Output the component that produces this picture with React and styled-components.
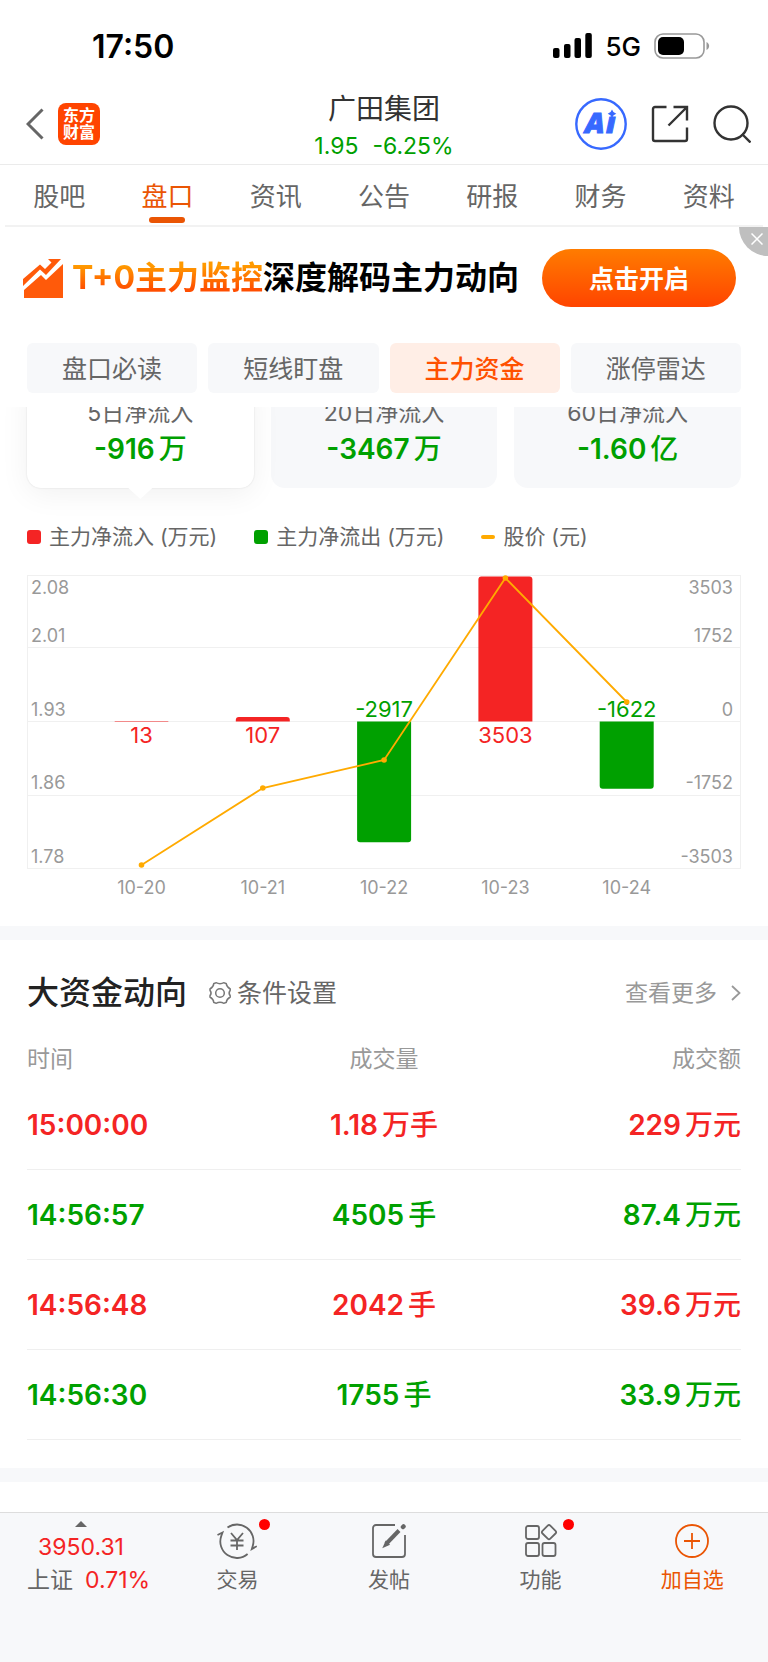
import styled, { createGlobalStyle, css } from "styled-components";

const tabs = ["股吧", "盘口", "资讯", "公告", "研报", "财务", "资料"];
const pills = ["盘口必读", "短线盯盘", "主力资金", "涨停雷达"];

const flows = [
  { label: "5日净流入", num: "-916", unit: "万" },
  { label: "20日净流入", num: "-3467", unit: "万" },
  { label: "60日净流入", num: "-1.60", unit: "亿" },
];

const days = [
  { date: "10-20", flow: 13, priceY: 295 },
  { date: "10-21", flow: 107, priceY: 218 },
  { date: "10-22", flow: -2917, priceY: 190 },
  { date: "10-23", flow: 3503, priceY: 8 },
  { date: "10-24", flow: -1622, priceY: 132 },
];

const axis = [
  { y: 5, textY: 18, price: "2.08", flow: "3503" },
  { y: 77, textY: 66, price: "2.01", flow: "1752" },
  { y: 151, textY: 140, price: "1.93", flow: "0" },
  { y: 225, textY: 213, price: "1.86", flow: "-1752" },
  { y: 298, textY: 287, price: "1.78", flow: "-3503" },
];

const deals = [
  { time: "15:00:00", volume: "1.18", volumeUnit: "万手", amount: "229", up: true },
  { time: "14:56:57", volume: "4505", volumeUnit: "手", amount: "87.4", up: false },
  { time: "14:56:48", volume: "2042", volumeUnit: "手", amount: "39.6", up: true },
  { time: "14:56:30", volume: "1755", volumeUnit: "手", amount: "33.9", up: false },
];

const RED = "#f42424";
const GREEN = "#00a000";
const ZERO_Y = 151.5;

const barPath = (x, flow) => {
  const h = (Math.abs(flow) / 3503) * 145;
  const r = Math.min(3, h);
  const dir = flow > 0 ? -1 : 1;
  const end = ZERO_Y + dir * h;
  return `M${x} ${ZERO_Y}V${end - dir * r}Q${x} ${end} ${x + r} ${end}H${x + 54 - r}Q${x + 54} ${end} ${x + 54} ${end - dir * r}V${ZERO_Y}Z`;
};

const FlowChart = () => {
  const cx = (i) => 114.5 + i * 121.3;
  return (
    <Chart viewBox="0 0 714 336" role="img" aria-label="主力资金净流入">
      <g stroke="#f0f0f0">
        {axis.map((a) => (
          <line key={a.y} x1="0" x2="714" y1={a.y + 0.5} y2={a.y + 0.5} />
        ))}
        <line x1="0.5" x2="0.5" y1="5" y2="299" />
        <line x1="713.5" x2="713.5" y1="5" y2="299" />
      </g>
      {days.map((d, i) => (
        <path key={d.date} d={barPath(cx(i) - 27, d.flow)} fill={d.flow > 0 ? RED : GREEN} />
      ))}
      {axis.map((a) => (
        <g key={a.y} fontSize="18" fill="#999">
          <text x="4" y={a.textY + 6}>{a.price}</text>
          <text x="706" y={a.textY + 6} textAnchor="end">{a.flow}</text>
        </g>
      ))}
      {days.map((d, i) => (
        <g key={d.date} textAnchor="middle">
          <text x={cx(i)} y={d.flow > 0 ? 173 : 147} fontSize="22" fill={d.flow > 0 ? RED : GREEN}>
            {d.flow}
          </text>
          <text x={cx(i)} y="324" fontSize="18" fill="#999">{d.date}</text>
        </g>
      ))}
      <polyline
        points={days.map((d, i) => `${cx(i)},${d.priceY}`).join(" ")}
        fill="none"
        stroke="#ffaa00"
        strokeWidth="1.8"
      />
      {days.map((d, i) => (
        <circle key={d.date} cx={cx(i)} cy={d.priceY} r="2.8" fill="#ffaa00" />
      ))}
    </Chart>
  );
};

const SignalIcon = () => (
  <svg width="39" height="26" viewBox="0 0 39 26">
    <rect x="0" y="15" width="6.5" height="10" rx="2" />
    <rect x="11" y="11" width="6.5" height="14" rx="2" />
    <rect x="21.5" y="5" width="6.5" height="20" rx="2" />
    <rect x="32.3" y="0" width="6.5" height="25" rx="2" />
  </svg>
);

const BatteryIcon = () => (
  <svg width="56" height="26" viewBox="0 0 56 26">
    <rect x="1" y="1" width="49" height="24" rx="8" fill="none" stroke="#999" strokeWidth="1.6" />
    <rect x="4" y="4" width="26" height="18" rx="5" />
    <path d="M52.5 9c3.5 1.5 3.5 6.5 0 8z" fill="#999" />
  </svg>
);

const BackIcon = () => (
  <svg width="18" height="32" viewBox="0 0 18 32" fill="none" stroke="#666" strokeWidth="3">
    <path d="M16.5 1.5 2 16l14.5 14.5" />
  </svg>
);

const AiIcon = () => (
  <svg width="52" height="52" viewBox="0 0 52 52" fill="#3769ff" stroke="#3769ff">
    <circle cx="26" cy="26" r="24.7" fill="none" strokeWidth="2.4" />
    <AiText x="10" y="35">A</AiText>
    <AiText x="31" y="35">ı</AiText>
    <path d="M37 11.500q1 3.300 4.300 4.300q-3.300 1-4.300 4.300q-1-3.300-4.300-4.300q3.300-1 4.300-4.300z" stroke="none" />
  </svg>
);

const ShareIcon = () => (
  <svg width="38" height="38" viewBox="0 0 38 38" fill="none" stroke="#333" strokeWidth="2.4">
    <path d="M15.500 2H4a2 2 0 0 0-2 2v30a2 2 0 0 0 2 2h30a2 2 0 0 0 2-2V22.500" />
    <path d="M22.500 2H36v13.500M36 2 17.500 20.500" />
  </svg>
);

const SearchIcon = () => (
  <svg width="38" height="38" viewBox="0 0 38 38" fill="none" stroke="#333" strokeWidth="2.4">
    <circle cx="18" cy="18" r="16.5" />
    <path d="m29 29 8.500 8.500" />
  </svg>
);

const TrendIcon = () => (
  <svg width="41" height="40" viewBox="0 0 41 40" fill="#ff5a0a">
    <path d="M0 21 17 6.500l5 4.500 6.500-6.500L25 1h13l-15 16-6-5.500L0 28z" />
    <path d="M1 32 18 17l5 5L40 6v34H1z" />
  </svg>
);

const GearIcon = () => (
  <svg width="22" height="24" viewBox="0 0 22 24" fill="none" stroke="#777" strokeWidth="1.5">
    <path d="M7 1.700q4 2 8 0l2.200.9q.5 3.300 4 5.400v1.200q-2.200 2.800 0 5.600v1.200q-3.500 2.100-4 5.400l-2.200.9q-4-2-8 0l-2.200-.9q-.3-3.300-3.800-5.400v-1.200q2.200-2.800 0-5.600V8q3.500-2.100 3.800-5.400z" />
    <circle cx="11" cy="12" r="4.3" />
  </svg>
);

const TradeIcon = () => (
  <svg width="40" height="36" viewBox="0 0 40 36" fill="none" stroke="#666" strokeWidth="1.8">
    <path d="M10.500 4.500A16.500 16.500 0 0 1 35.700 23.100L34.800 26l5-2.800" />
    <path d="M30.600 31A16.500 16.500 0 0 1 4.300 12.900L5.500 9.500.5 12" />
    <path d="m14 10 6 7 6-7M20 17v10M13.500 17.500h13M13.500 22.500h13" />
  </svg>
);

const PostIcon = () => (
  <svg width="36" height="36" viewBox="0 0 36 36" fill="none" stroke="#666" strokeWidth="1.8">
    <path d="M24 2H5a3 3 0 0 0-3 3v26a3 3 0 0 0 3 3h26a3 3 0 0 0 3-3V12" />
    <path d="M15 21 28 7.500" strokeWidth="4" />
    <path d="m13 23.500 2-4.500 2.500 2.500z" fill="#666" />
    <path d="m32 4 .5-.5" strokeWidth="4.5" strokeLinecap="round" />
  </svg>
);

const GridIcon = () => (
  <svg width="36" height="36" viewBox="0 0 36 36" fill="none" stroke="#666" strokeWidth="1.8">
    <rect x="3" y="3" width="13" height="13" rx="2" />
    <rect x="3" y="20" width="13" height="13" rx="2" />
    <rect x="19.5" y="20" width="13" height="13" rx="2" />
    <path d="m24.700 2.700-5.200 5.200q-1.300 1.300 0 2.600l5.200 5.200q1.300 1.300 2.600 0l5.200-5.200q1.300-1.300 0-2.600l-5.200-5.200q-1.300-1.300-2.600 0z" />
  </svg>
);

const AddIcon = () => (
  <svg width="36" height="36" viewBox="0 0 36 36" fill="none" stroke="#ea5504" strokeWidth="1.8">
    <circle cx="18" cy="18" r="16" />
    <path d="M18 10v16M10 18h16" />
  </svg>
);

const App = () => {
  return (
    <Page>
      <GlobalStyle />
      <StatusBar>
        <Clock>17:50</Clock>
        <StatusIcons>
          <SignalIcon />
          <span>5G</span>
          <BatteryIcon />
        </StatusIcons>
      </StatusBar>

      <Header>
        <HeaderSide>
          <IconButton aria-label="返回"><BackIcon /></IconButton>
          <Logo href="#home">东方<br />财富</Logo>
        </HeaderSide>
        <Stock>
          <StockName>广田集团</StockName>
          <Quote><span>1.95</span><span>-6.25%</span></Quote>
        </Stock>
        <HeaderSide $end>
          <IconButton aria-label="AI"><AiIcon /></IconButton>
          <IconButton aria-label="分享"><ShareIcon /></IconButton>
          <IconButton aria-label="搜索"><SearchIcon /></IconButton>
        </HeaderSide>
      </Header>

      <Tabs>
        {tabs.map((t) => (
          <Tab key={t} href="#tab" $active={t === "盘口"}>{t}</Tab>
        ))}
      </Tabs>

      <Banner>
        <TrendIcon />
        <BannerText><em>T+0主力监控</em>深度解码主力动向</BannerText>
        <BannerButton>点击开启</BannerButton>
        <CloseButton aria-label="关闭">
          <svg width="12" height="12" viewBox="0 0 12 12" stroke="#fff" strokeWidth="1.5">
            <path d="m.5.5 11 11M11.500.5l-11 11" />
          </svg>
        </CloseButton>
      </Banner>

      <Pills>
        {pills.map((p) => (
          <Pill key={p} $active={p === "主力资金"}>{p}</Pill>
        ))}
      </Pills>

      <Content>
        <Cards>
          {flows.map((f, i) => (
            <Card key={f.label} $active={i === 0}>
              <CardLabel>{f.label}</CardLabel>
              <Amount $color={GREEN}><span>{f.num}</span><Unit>{f.unit}</Unit></Amount>
            </Card>
          ))}
        </Cards>

        <Legend>
          <LegendItem $color={RED}>主力净流入 (万元)</LegendItem>
          <LegendItem $color={GREEN}>主力净流出 (万元)</LegendItem>
          <LegendItem $color="#ffaa00" $line>股价 (元)</LegendItem>
        </Legend>
        <FlowChart />

        <Divider />

        <SectionHead>
          <SectionTitle>大资金动向</SectionTitle>
          <SettingsButton><GearIcon />条件设置</SettingsButton>
          <MoreLink href="#more">
            查看更多
            <svg width="10" height="16" viewBox="0 0 10 16" fill="none" stroke="#999" strokeWidth="1.8">
              <path d="m1 1 7.500 7L1 15" />
            </svg>
          </MoreLink>
        </SectionHead>
        <Deals>
          <thead>
            <tr><th>时间</th><th>成交量</th><th>成交额</th></tr>
          </thead>
          <tbody>
            {deals.map((d) => (
              <tr key={d.time}>
                <td><Amount $color={d.up ? RED : GREEN}>{d.time}</Amount></td>
                <td>
                  <Amount $color={d.up ? RED : GREEN}>
                    <span>{d.volume}</span><Unit>{d.volumeUnit}</Unit>
                  </Amount>
                </td>
                <td>
                  <Amount $color={d.up ? RED : GREEN}>
                    <span>{d.amount}</span><Unit>万元</Unit>
                  </Amount>
                </td>
              </tr>
            ))}
          </tbody>
        </Deals>

        <Divider />
      </Content>

      <BottomBar>
        <IndexItem href="#index">
          <IndexStack>
            <svg width="12" height="6" viewBox="0 0 12 6" fill="#666"><path d="m6 0 6 6H0z" /></svg>
            <IndexValue>3950.31</IndexValue>
            <IndexRow>上证<IndexValue>0.71%</IndexValue></IndexRow>
          </IndexStack>
        </IndexItem>
        <NavItem $dot><span><TradeIcon /></span>交易</NavItem>
        <NavItem><span><PostIcon /></span>发帖</NavItem>
        <NavItem $dot><span><GridIcon /></span>功能</NavItem>
        <NavItem $accent><span><AddIcon /></span>加自选</NavItem>
      </BottomBar>
    </Page>
  );
};

const GlobalStyle = createGlobalStyle`
  * {
    box-sizing: border-box;
  }

  body {
    margin: 0;
    background: #fff;
    font-family: Inter, "Noto Sans CJK SC", sans-serif;
    color: #666;
  }

  button {
    border: 0;
    padding: 0;
    background: none;
    font: inherit;
    color: inherit;
    cursor: pointer;
  }

  a {
    color: inherit;
    text-decoration: none;
  }

  svg {
    display: block;
    flex: none;
  }
`;

const Page = styled.div`
  display: flex;
  flex-direction: column;
  min-height: 100vh;
`;

const StatusBar = styled.div`
  display: flex;
  justify-content: space-between;
  align-items: center;
  height: 84px;
  padding: 8px 58px 0 92px;
  color: #000;
`;

const Clock = styled.span`
  font-size: 32px;
  font-weight: 600;
`;

const StatusIcons = styled.div`
  display: flex;
  align-items: center;
  gap: 13px;
  font-size: 26px;
  font-weight: 500;
`;

const Header = styled.header`
  display: grid;
  grid-template-columns: 1fr auto 1fr;
  align-items: center;
  height: 81px;
  padding: 0 17px 0 26px;
  border-bottom: 1px solid #ebebeb;
`;

const HeaderSide = styled.div`
  display: flex;
  align-items: center;
  gap: ${(p) => (p.$end ? "24px" : "14px")};
  justify-content: ${(p) => (p.$end ? "flex-end" : "flex-start")};
`;

const IconButton = styled.button`
  display: grid;
  place-content: center;
`;

const AiText = styled.text`
  font-family: "Open Sans", sans-serif;
  font-size: 29px;
  font-weight: 800;
  font-style: italic;
`;

const Logo = styled.a`
  display: grid;
  place-content: center;
  width: 42px;
  height: 42px;
  border-radius: 8px;
  background: #ff4400;
  color: #fff;
  font-size: 16px;
  font-weight: 700;
  line-height: 17px;
`;

const Stock = styled.div`
  display: flex;
  flex-direction: column;
  align-items: center;
  padding: 4px 9px 0 0;
`;

const StockName = styled.h1`
  margin: 0;
  font-size: 28px;
  font-weight: 400;
  line-height: 40px;
  color: #333;
`;

const Quote = styled.div`
  display: flex;
  gap: 14px;
  font-size: 23px;
  line-height: 34px;
  color: ${GREEN};
`;

const Tabs = styled.nav`
  display: flex;
  height: 62px;
  margin: 0 5px;
  border-bottom: 2px solid #f2f2f2;
`;

const Tab = styled.a`
  flex: 1;
  display: flex;
  flex-direction: column;
  align-items: center;
  padding-top: 11px;
  font-size: 26px;
  line-height: 41px;
  color: ${(p) => (p.$active ? "#ea5504" : "#666")};

  ${(p) =>
    p.$active &&
    css`
      &::after {
        content: "";
        width: 36px;
        height: 6px;
        border-radius: 3px;
        background: #ea5504;
      }
    `}
`;

const Banner = styled.section`
  position: relative;
  display: flex;
  align-items: center;
  height: 102px;
  padding: 0 32px 0 23px;
`;

const BannerText = styled.p`
  margin: 0 auto 0 8px;
  font-size: 32px;
  font-weight: 700;
  line-height: 40px;
  color: #000;
  white-space: nowrap;

  em {
    font-style: normal;
    color: transparent;
    background: linear-gradient(#ff9a00 20%, #ff4e00 80%);
    background-clip: text;
  }
`;

const BannerButton = styled.button`
  width: 194px;
  height: 58px;
  padding-bottom: 2px;
  border-radius: 29px;
  background: linear-gradient(#ff7c00, #ff4400);
  color: #fff;
  font-size: 25px;
  font-weight: 700;
`;

const CloseButton = styled.button`
  position: absolute;
  top: 0;
  right: 0;
  display: grid;
  place-content: center;
  width: 29px;
  height: 29px;
  padding: 0 0 6px 6px;
  border-bottom-left-radius: 29px;
  background: #bfbfbf;
`;

const Pills = styled.div`
  display: grid;
  grid-template-columns: repeat(4, 1fr);
  gap: 11px;
  padding: 14px 27px;
`;

const Pill = styled.button`
  height: 50px;
  padding-bottom: 2px;
  border-radius: 6px;
  font-size: 25px;
  background: ${(p) => (p.$active ? "#ffeee6" : "#f7f8fa")};
  color: ${(p) => (p.$active ? "#ff5000" : "#666")};
  font-weight: ${(p) => (p.$active ? 500 : 400)};
`;

const Content = styled.main`
  flex: 1;
  overflow: hidden;
`;

const Cards = styled.div`
  display: grid;
  grid-template-columns: repeat(3, 1fr);
  gap: 17px;
  margin-top: -28px;
  padding: 0 27px;
`;

const Card = styled.div`
  display: flex;
  flex-direction: column;
  align-items: center;
  gap: 4px;
  padding: 20px 0 21px;
  border-radius: 14px;
  background: #f7f8fa;

  ${(p) =>
    p.$active &&
    css`
      position: relative;
      background: #fff;
      box-shadow: 0 0 2px rgba(0, 0, 0, 0.12), 0 6px 30px rgba(0, 0, 0, 0.06);

      &::after {
        content: "";
        position: absolute;
        top: 100%;
        left: 50%;
        width: 24px;
        height: 11px;
        margin-left: -12px;
        background: #fff;
        clip-path: polygon(0 0, 100% 0, 50% 100%);
      }
    `}
`;

const CardLabel = styled.span`
  font-size: 23px;
  line-height: 28px;
`;

const Amount = styled.span`
  display: inline-flex;
  gap: 4px;
  font-size: 28px;
  font-weight: 600;
  line-height: 36px;
  color: ${(p) => p.$color};
`;

const Unit = styled.span`
  font-weight: 500;
`;

const Legend = styled.div`
  display: flex;
  gap: 37px;
  margin: 35px 27px 19px;
`;

const LegendItem = styled.span`
  display: flex;
  align-items: center;
  gap: 8px;
  font-size: 21px;
  line-height: 28px;
  white-space: nowrap;

  &::before {
    content: "";
    width: 14px;
    height: ${(p) => (p.$line ? "4px" : "14px")};
    border-radius: ${(p) => (p.$line ? "2px" : "3px")};
    background: ${(p) => p.$color};
  }
`;

const Chart = styled.svg`
  width: calc(100% - 54px);
  margin: 0 27px 20px;
`;

const Divider = styled.div`
  height: 14px;
  background: #f7f8fa;
`;

const SectionHead = styled.div`
  display: flex;
  align-items: center;
  padding: 33px 27px 24px;
  line-height: 40px;
`;

const SectionTitle = styled.h2`
  margin: 0 22px 0 0;
  font-size: 32px;
  font-weight: 500;
  color: #222;
`;

const SettingsButton = styled.button`
  display: flex;
  align-items: center;
  gap: 6px;
  font-size: 25px;
`;

const MoreLink = styled.a`
  display: flex;
  align-items: center;
  gap: 14px;
  margin-left: auto;
  font-size: 23px;
  color: #999;
`;

const Deals = styled.table`
  width: calc(100% - 54px);
  margin: 0 27px 28px;
  table-layout: fixed;
  border-collapse: separate;
  border-spacing: 0;
  text-align: center;

  th {
    height: 43px;
    padding: 0 0 3px;
    font-size: 23px;
    font-weight: 400;
    color: #999;
  }

  td {
    height: 90px;
    padding: 0;
    border-bottom: 1px solid #efefef;
    vertical-align: middle;
  }

  th:first-child,
  td:first-child {
    text-align: left;
  }

  th:last-child,
  td:last-child {
    text-align: right;
  }
`;

const BottomBar = styled.nav`
  display: grid;
  grid-template-columns: repeat(5, 1fr);
  align-items: start;
  height: 150px;
  margin-top: 30px;
  padding-left: 10px;
  border-top: 1px solid #ddd;
  background: #f7f8fa;
`;

const IndexItem = styled.a`
  padding: 8px 0 0 17px;
`;

const IndexStack = styled.span`
  display: flex;
  flex-direction: column;
  align-items: center;
  width: 108px;
`;

const IndexValue = styled.span`
  font-size: 23px;
  line-height: 41px;
  color: ${RED};
`;

const IndexRow = styled.span`
  display: flex;
  align-self: flex-start;
  gap: 12px;
  font-size: 23px;
  line-height: 24px;
  white-space: nowrap;

  ${IndexValue} {
    line-height: 24px;
  }
`;

const NavItem = styled.button`
  display: flex;
  flex-direction: column;
  align-items: center;
  gap: 6px;
  padding-top: 10px;
  font-size: 21px;
  line-height: 30px;
  color: ${(p) => (p.$accent ? "#ea5504" : "#666")};

  span {
    position: relative;
  }

  ${(p) =>
    p.$dot &&
    css`
      span::after {
        content: "";
        position: absolute;
        top: -4px;
        left: 50%;
        width: 11px;
        height: 11px;
        margin-left: 22px;
        border-radius: 50%;
        background: #ff0000;
      }
    `}
`;

export default App;
